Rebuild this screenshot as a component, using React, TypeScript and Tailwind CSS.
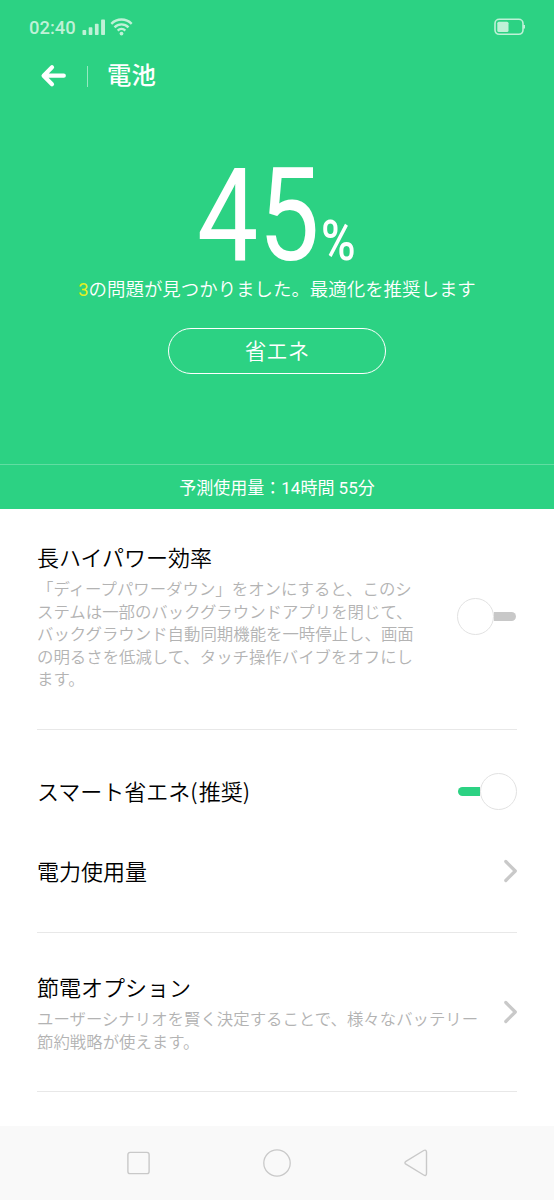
import type { ReactNode } from 'react';

function StatusBar() {
  return (
    <div className="flex h-[54px] items-center px-[29px] text-[#bff1d7]">
      <span className="w-[53px] pt-[1px] text-[18.400px] leading-[54px] font-medium">02:40</span>
      <svg width="24" height="18" viewBox="0 0 24 18" fill="currentColor">
        <rect x="0.5" y="12" width="3.700" height="5" rx="0.8" />
        <rect x="6.7" y="9.3" width="3.700" height="7.7" rx="0.8" />
        <rect x="12.9" y="5.8" width="3.700" height="11.2" rx="0.8" />
        <rect x="19.1" y="1.500" width="3.900" height="15.500" rx="0.8" />
      </svg>
      <svg className="ml-[4px]" width="23" height="18" viewBox="0 0 23 18" fill="none" stroke="currentColor" strokeWidth="2.4">
        <path d="M1.3 5.8a14.4 14.4 0 0 1 20.4 0" />
        <path d="M4.5 9.3a9.9 9.9 0 0 1 14 0" />
        <path d="M7.7 12.6a5.4 5.4 0 0 1 7.6 0" />
        <circle cx="11.5" cy="15.6" r="1.9" fill="currentColor" stroke="none" />
      </svg>
      <svg className="ml-auto" width="32" height="18" viewBox="0 0 32 18" fill="none">
        <rect x="2" y="1.3" width="28" height="15" rx="4.2" stroke="currentColor" strokeWidth="1.6" />
        <rect x="4.300" y="3.7" width="11.2" height="10.3" rx="1.5" fill="currentColor" />
        <path d="M31 7v3.4" stroke="currentColor" strokeWidth="2" />
      </svg>
    </div>
  );
}

function Switch({ on = false }: { on?: boolean }) {
  return (
    <button role="switch" aria-checked={on} className={on ? 'flex w-[60px] items-center' : 'flex w-[60px] flex-row-reverse items-center'}>
      <span className={on ? 'ml-[1px] h-[9px] w-[22px] rounded-l-full bg-[#2cd283]' : 'mr-[1px] h-[9px] w-[22px] rounded-r-full bg-[#c8c8c8]'} />
      <span className="h-[37px] w-[37px] rounded-full border border-[#e2e2e2] bg-white" />
    </button>
  );
}

function Chevron() {
  return (
    <svg width="14" height="24" viewBox="0 0 14 24" fill="none" stroke="#c9c9c9" strokeWidth="3.2" strokeLinecap="round" strokeLinejoin="round">
      <path d="M2.8 2.5 12.3 12l-9.500 9.500" />
    </svg>
  );
}

function Title({ children }: { children: ReactNode }) {
  return <h2 className="pb-[3px] font-['Noto_Sans_CJK_JP',sans-serif] text-[22px] leading-[32px] font-[350] whitespace-nowrap text-black">{children}</h2>;
}

function Description({ lines }: { lines: string[] }) {
  return (
    <p className="mt-[4px] text-[16.420px] leading-[22.600px] font-[350] whitespace-nowrap text-[#b3b3b3]">
      {lines.map((line) => (
        <span key={line} className="block">{line}</span>
      ))}
    </p>
  );
}

export default function App() {
  return (
    <div className="flex h-[1200px] w-[554px] flex-col overflow-hidden bg-white font-['Roboto','Noto_Sans_CJK_JP',sans-serif]" lang="ja">
      <header className="flex h-[509px] shrink-0 flex-col bg-[#2cd283] text-white">
        <StatusBar />
        <div className="flex h-[44px] items-center pl-[40px]">
          <svg width="27" height="24" viewBox="0 0 27 24" fill="none" stroke="white" strokeWidth="4.2" strokeLinecap="round" strokeLinejoin="round">
            <path d="M12 3.200 3.600 11.700l8.400 8.600M4 11.700h19.800" />
          </svg>
          <span className="ml-[20px] h-[21px] w-px bg-white/50" />
          <h1 className="ml-[19px] text-[24.400px] leading-[36px] font-medium">電池</h1>
        </div>
        <div className="flex h-[178px] items-end pl-[197px] leading-none">
          <div className="flex h-[120px] w-[124px] items-end">
            <span className="origin-left scale-x-[0.84] text-[130px] leading-[121px] whitespace-nowrap">45</span>
          </div>
          <div className="flex h-[70px] w-[40px] items-end">
            <span className="origin-left scale-x-[0.84] text-[56px] leading-[69px] font-medium">%</span>
          </div>
        </div>
        <p className="text-center text-[18.450px] leading-[28px] font-[350] whitespace-nowrap">
          <span className="font-normal text-[#e4f01f]">3</span>の問題が見つかりました。最適化を推奨します
        </p>
        <button className="mx-auto mt-[24px] h-[46px] w-[218px] rounded-full border border-white pt-[2px] text-[21.500px] leading-[42px] font-[350]">省エネ</button>
        <div className="mt-auto flex h-[45px] items-center justify-center border-t border-white/25 pt-[3px] text-[17px] font-normal">
          予測使用量：14時間 55分
        </div>
      </header>

      <main className="flex flex-1 flex-col px-[37px]">
        <section className="flex h-[221px] items-center justify-between border-b border-[#e8e8e8]">
          <div className="self-start pt-[31px]">
            <Title>長ハイパワー効率</Title>
            <Description
              lines={[
                '「ディープパワーダウン」をオンにすると、このシ',
                'ステムは一部のバックグラウンドアプリを閉じて、',
                'バックグラウンド自動同期機能を一時停止し、画面',
                'の明るさを低減して、タッチ操作バイブをオフにし',
                'ます。',
              ]}
            />
          </div>
          <div className="flex pb-[6px]">
            <Switch />
          </div>
        </section>
        <section className="flex h-[203px] flex-col border-b border-[#e8e8e8] pt-[21px]">
          <div className="flex h-[80px] items-center justify-between">
            <Title>
              スマート省エネ<span className="pr-px">(</span>推奨<span>)</span>
            </Title>
            <Switch on />
          </div>
          <div className="flex h-[80px] items-center justify-between">
            <Title>電力使用量</Title>
            <Chevron />
          </div>
        </section>
        <section className="flex h-[159px] items-center justify-between border-b border-[#e8e8e8]">
          <div className="self-start pt-[37px]">
            <Title>節電オプション</Title>
            <Description lines={['ユーザーシナリオを賢く決定することで、様々なバッテリー', '節約戦略が使えます。']} />
          </div>
          <Chevron />
        </section>
      </main>

      <nav className="flex h-[74px] shrink-0 items-center justify-between bg-[#f9f9f9] pr-[126px] pl-[126px]">
        <svg width="24" height="24" viewBox="0 0 24 24" fill="none" stroke="#c9c9c9" strokeWidth="1.4">
          <rect x="1.900" y="1.400" width="21.200" height="21.200" rx="2.2" />
        </svg>
        <svg width="28" height="28" viewBox="0 0 28 28" fill="none" stroke="#c9c9c9" strokeWidth="1.3">
          <circle cx="14" cy="14" r="13.200" />
        </svg>
        <svg width="24" height="28" viewBox="0 0 24 28" fill="none" stroke="#c9c9c9" strokeWidth="1.4">
          <path d="M1.900 12.300 19.700 1.500c1.600-.9 2.800-.2 2.800 1.500v21.500c0 1.800-1.200 2.500-2.800 1.500L1.900 15.200c-1.300-.8-1.300-2.100 0-2.900Z" />
        </svg>
      </nav>
    </div>
  );
}
